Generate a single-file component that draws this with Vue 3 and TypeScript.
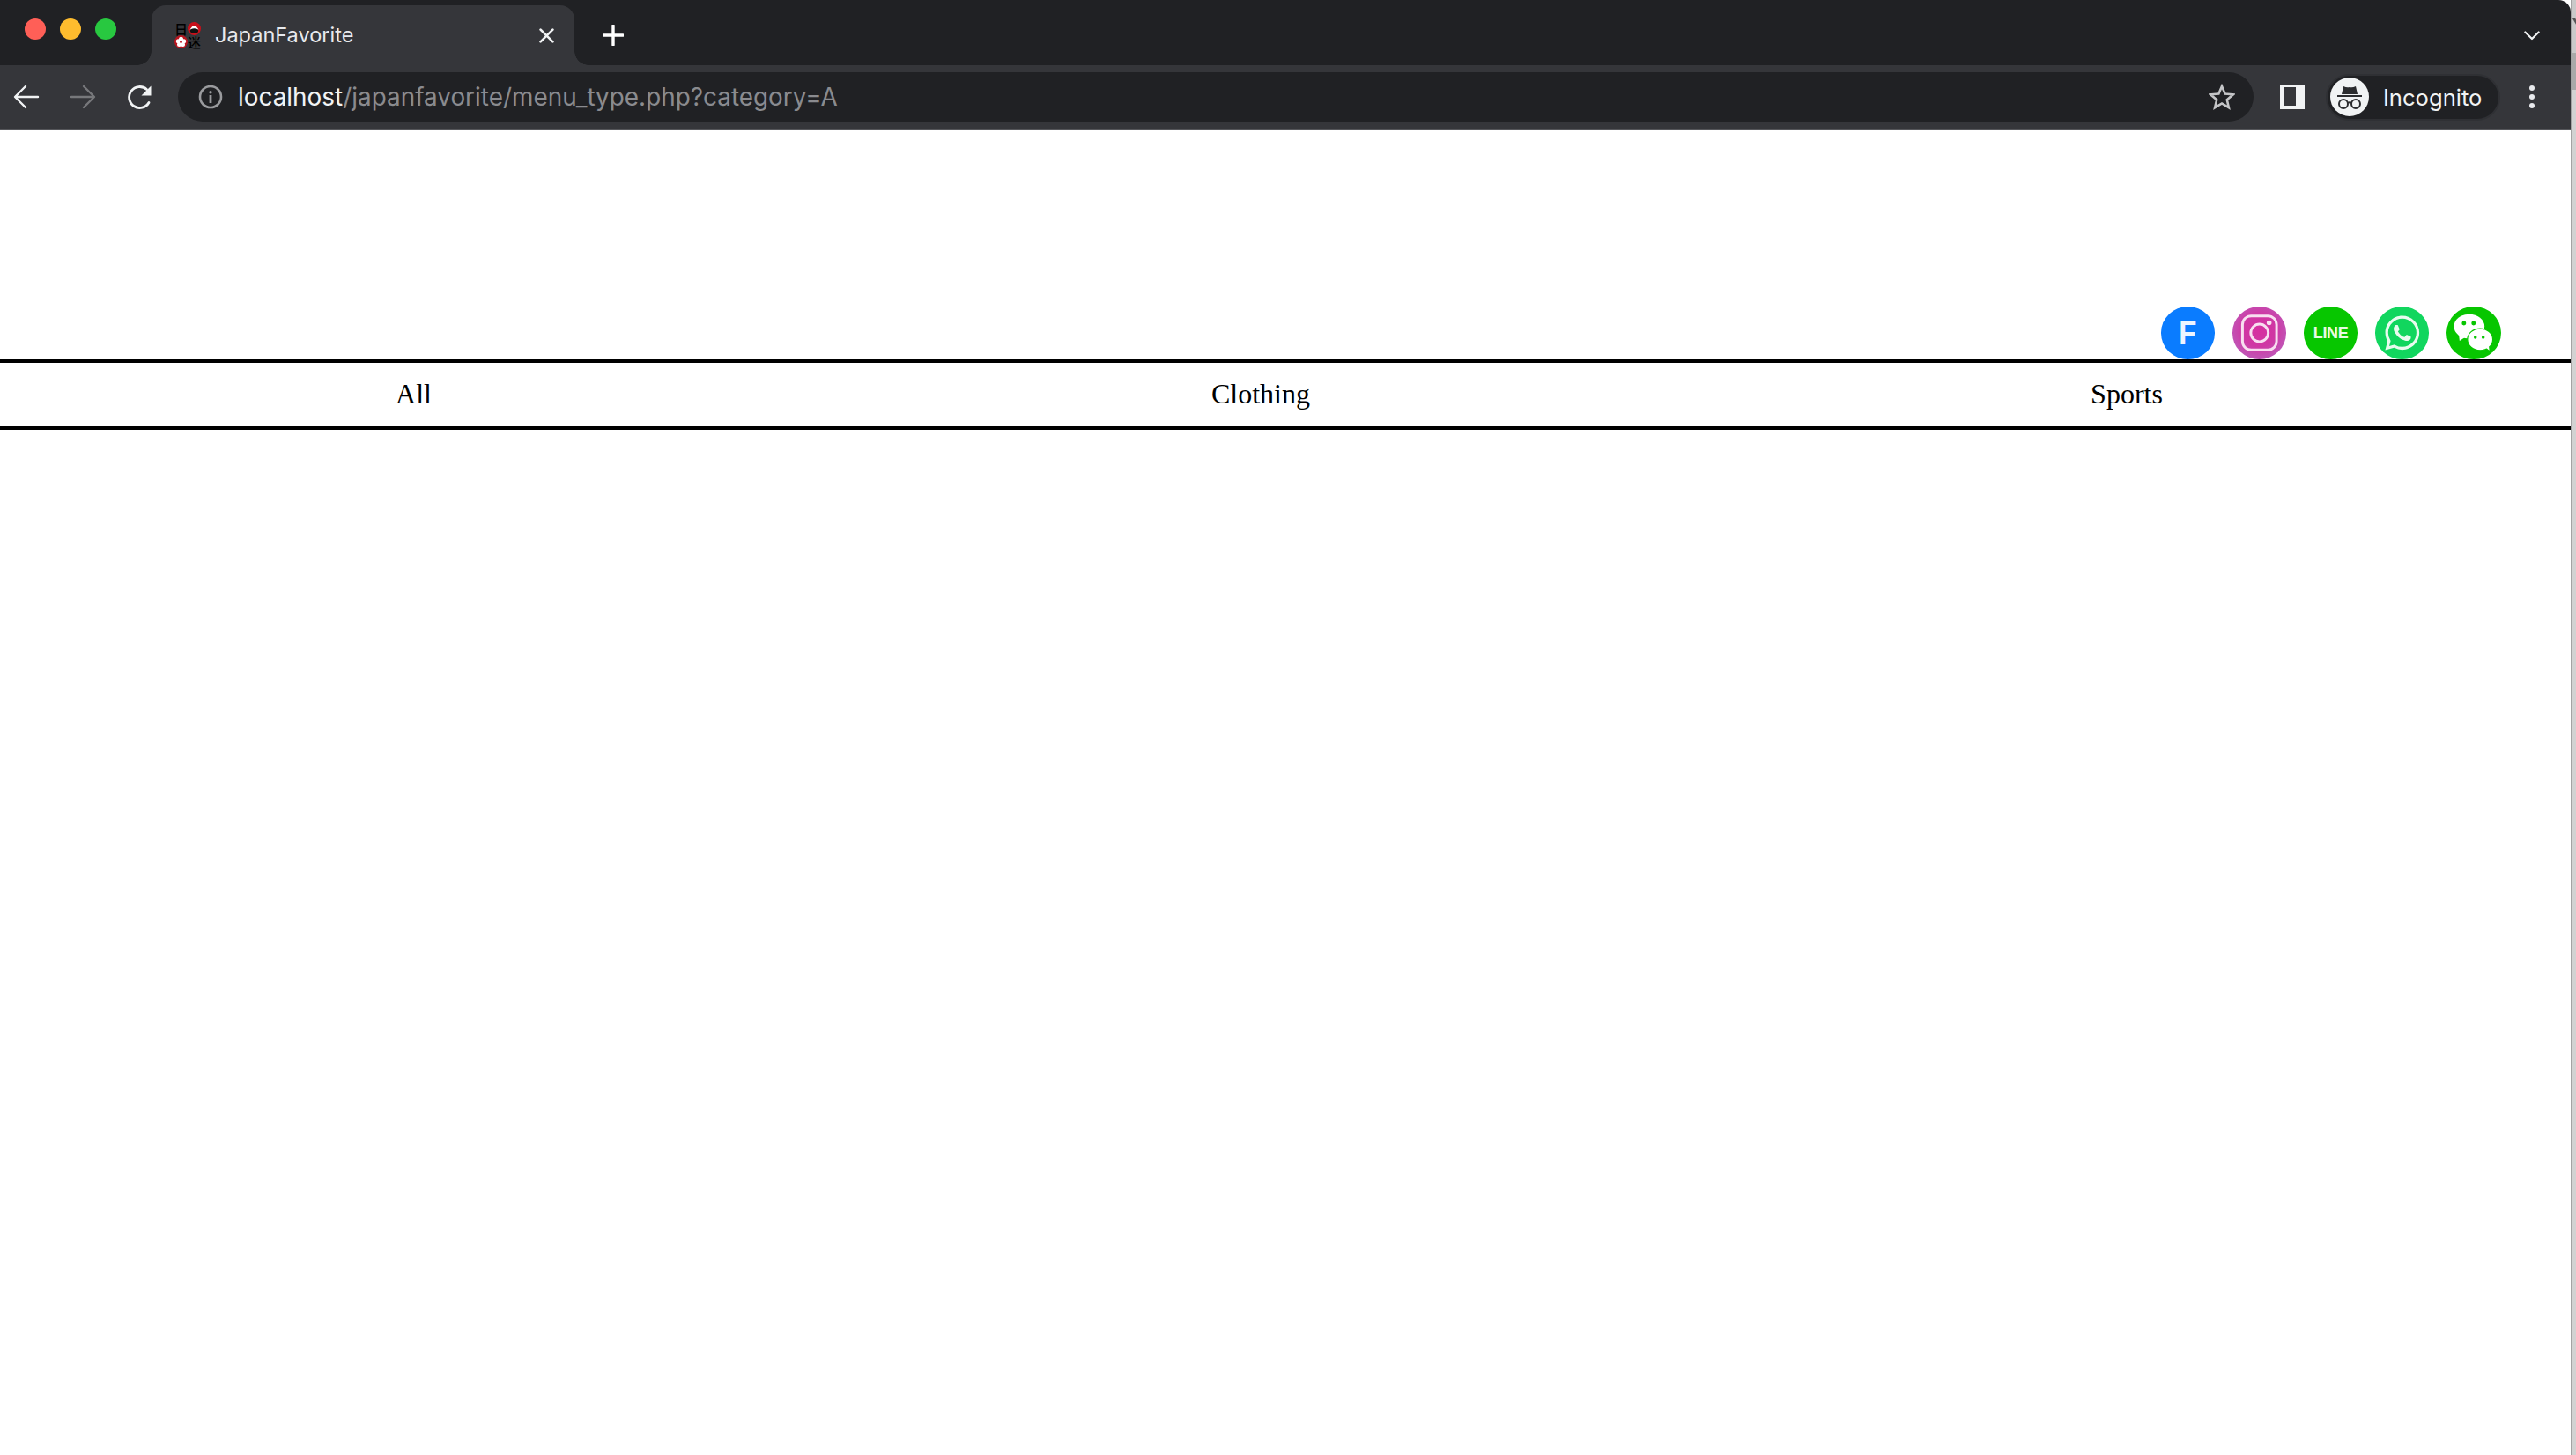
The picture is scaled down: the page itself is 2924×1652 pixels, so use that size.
<script setup lang="ts">
const columns: string[] = ['All', 'Clothing', 'Sports']
</script>

<template>
  <div class="screen">
    <div class="window">
      <div class="tabstrip">
        <div class="lights">
          <span class="light red"></span>
          <span class="light yellow"></span>
          <span class="light green"></span>
        </div>
        <div class="tab">
          <div class="favicon">
            <span class="kanji">日</span>
            <svg viewBox="0 0 15 15" class="fav-mark">
              <circle cx="7.5" cy="7.5" r="7.5" fill="#c8101a" />
              <path d="M2.5 8.5 L6 4 H9 L12.5 8.5 Z" fill="#fff" />
              <ellipse cx="7.5" cy="10" rx="4.6" ry="2.8" fill="#111" />
            </svg>
            <svg viewBox="0 0 15 15" class="fav-mark">
              <circle cx="7.5" cy="7.5" r="7.5" fill="#b8141e" />
              <circle cx="7.5" cy="4.2" r="2.5" fill="#fff" />
              <circle cx="4.3" cy="6.8" r="2.5" fill="#fff" />
              <circle cx="10.7" cy="6.8" r="2.5" fill="#fff" />
              <circle cx="5.5" cy="10.5" r="2.5" fill="#fff" />
              <circle cx="9.5" cy="10.5" r="2.5" fill="#fff" />
              <circle cx="7.5" cy="7.6" r="1.3" fill="#b8141e" />
            </svg>
            <span class="kanji">迷</span>
          </div>
          <span class="tab-title">JapanFavorite</span>
          <svg class="tab-close" viewBox="0 0 16 16">
            <path d="M1.5 1.5 L14.5 14.5 M14.5 1.5 L1.5 14.5" stroke="#f1f3f4" stroke-width="2.5" stroke-linecap="round" />
          </svg>
        </div>
        <svg class="new-tab" viewBox="0 0 24 24">
          <path d="M12 1 V23 M1 12 H23" stroke="#fff" stroke-width="3.4" stroke-linecap="round" />
        </svg>
        <svg class="tab-list" viewBox="0 0 20 12">
          <path d="M1.5 1.5 L10 10 L18.5 1.5" fill="none" stroke="#f1f3f4" stroke-width="2.4" stroke-linecap="round" stroke-linejoin="round" />
        </svg>
      </div>

      <div class="toolbar">
        <div class="nav-btn">
          <svg viewBox="0 0 36 36" class="nav-icon">
            <path d="M31 18 H6 M17 6 L5 18 L17 30" fill="none" stroke="#f1f3f4" stroke-width="2.4" stroke-linecap="round" stroke-linejoin="round" />
          </svg>
        </div>
        <div class="nav-btn">
          <svg viewBox="0 0 36 36" class="nav-icon">
            <path d="M5 18 H30 M19 6 L31 18 L19 30" fill="none" stroke="#77787b" stroke-width="2.4" stroke-linecap="round" stroke-linejoin="round" />
          </svg>
        </div>
        <div class="nav-btn">
          <svg viewBox="0 0 36 36" class="nav-icon">
            <path d="M29 24.5 A12 12 0 1 1 26.5 9.5" fill="none" stroke="#f1f3f4" stroke-width="2.8" stroke-linecap="round" />
            <path d="M31.5 5.5 V16.5 H20.5 Z" fill="#f1f3f4" />
          </svg>
        </div>

        <div class="omnibox">
          <svg class="info" viewBox="0 0 28 28">
            <circle cx="14" cy="14" r="12" fill="none" stroke="#9a9b9e" stroke-width="2.6" />
            <circle cx="14" cy="8.8" r="1.7" fill="#9a9b9e" />
            <rect x="12.6" y="12" width="2.8" height="9" fill="#9a9b9e" />
          </svg>
          <span class="url"><span class="host">localhost</span><span class="path">/japanfavorite/menu_type.php?category=A</span></span>
          <svg class="star" viewBox="0 0 30 30">
            <path d="M15 3 L18.6 11.6 L27.8 12.3 L20.8 18.3 L22.9 27.2 L15 22.5 L7.1 27.2 L9.2 18.3 L2.2 12.3 L11.4 11.6 Z" fill="none" stroke="#c4c5c7" stroke-width="2.6" stroke-linejoin="miter" />
          </svg>
        </div>

        <div class="side-panel"><span class="side-inner"></span></div>

        <div class="pill">
          <div class="avatar">
            <svg viewBox="0 0 44 44" class="avatar-svg">
              <path d="M15 10 Q19 12 22 11 Q25 12 29 10 L31 19 H13 Z" fill="#2b2c2f" />
              <rect x="8" y="20" width="28" height="2" fill="#2b2c2f" />
              <circle cx="15" cy="30" r="5" fill="none" stroke="#2b2c2f" stroke-width="2" />
              <circle cx="29" cy="30" r="5" fill="none" stroke="#2b2c2f" stroke-width="2" />
              <path d="M20 29 Q22 27.5 24 29" fill="none" stroke="#2b2c2f" stroke-width="2" />
            </svg>
          </div>
          <span class="pill-label">Incognito</span>
        </div>

        <div class="menu">
          <span class="dot"></span>
          <span class="dot"></span>
          <span class="dot"></span>
        </div>
      </div>

      <div class="page">
        <div class="socials">
          <div class="social fb">F</div>
          <div class="social ig">
            <svg viewBox="0 0 62 60" class="social-svg">
              <rect x="11.5" y="10.5" width="39" height="39" rx="10" fill="none" stroke="#f8dff0" stroke-width="3" />
              <circle cx="31" cy="30" r="10" fill="none" stroke="#f8dff0" stroke-width="3" />
              <circle cx="42" cy="18.5" r="2.8" fill="#f8dff0" />
            </svg>
          </div>
          <div class="social line">LINE</div>
          <div class="social wa">
            <svg viewBox="-6.5 -6.5 37 37" class="social-svg">
              <path fill="#e9fbef" d="M17.472 14.382c-.297-.149-1.758-.867-2.03-.967-.273-.099-.471-.148-.67.15-.197.297-.767.966-.94 1.164-.173.199-.347.223-.644.075-.297-.15-1.255-.463-2.39-1.475-.883-.788-1.48-1.761-1.653-2.059-.173-.297-.018-.458.13-.606.134-.133.298-.347.446-.52.149-.174.198-.298.298-.497.099-.198.05-.371-.025-.52-.075-.149-.669-1.612-.916-2.207-.242-.579-.487-.5-.669-.51-.173-.008-.371-.01-.57-.01-.198 0-.52.074-.792.372-.272.297-1.04 1.016-1.04 2.479 0 1.462 1.065 2.875 1.213 3.074.149.198 2.096 3.2 5.077 4.487.709.306 1.262.489 1.694.625.712.227 1.36.195 1.871.118.571-.085 1.758-.719 2.006-1.413.248-.694.248-1.289.173-1.413-.074-.124-.272-.198-.57-.347m-5.421 7.403h-.004a9.87 9.87 0 01-5.031-1.378l-.361-.214-3.741.982.998-3.648-.235-.374a9.86 9.86 0 01-1.51-5.26c.001-5.45 4.436-9.884 9.888-9.884 2.64 0 5.122 1.03 6.988 2.898a9.825 9.825 0 012.893 6.994c-.003 5.45-4.437 9.884-9.885 9.884m8.413-18.297A11.815 11.815 0 0012.05 0C5.495 0 .16 5.335.157 11.892c0 2.096.547 4.142 1.588 5.945L.057 24l6.305-1.654a11.882 11.882 0 005.683 1.448h.005c6.554 0 11.89-5.335 11.893-11.893a11.821 11.821 0 00-3.48-8.413Z" />
            </svg>
          </div>
          <div class="social wc">
            <svg viewBox="0 0 62 60" class="social-svg">
              <ellipse cx="26" cy="22.5" rx="17.5" ry="14" fill="#fff" />
              <path d="M14 31 L15 39 L23 34 Z" fill="#fff" />
              <ellipse cx="38.5" cy="37.5" rx="14.5" ry="12.5" fill="#fff" stroke="#07c600" stroke-width="1.2" />
              <path d="M43 45 L49 50 L48 42 Z" fill="#fff" />
              <circle cx="20" cy="19" r="2.5" fill="#07c600" />
              <circle cx="31" cy="19" r="2.5" fill="#07c600" />
              <circle cx="33" cy="35" r="1.8" fill="#07c600" />
              <circle cx="42" cy="35" r="1.8" fill="#07c600" />
            </svg>
          </div>
        </div>
        <nav class="cats">
          <a v-for="c in columns" :key="c" class="cat">{{ c }}</a>
        </nav>
      </div>
    </div>

    <div class="backdrop">
      <div class="backdrop-top"><span class="backdrop-glyph"></span></div>
      <div class="backdrop-band"></div>
      <div class="backdrop-rest"></div>
    </div>
  </div>
</template>

<style scoped>
.screen {
  display: flex;
  width: 2924px;
  height: 1652px;
  overflow: hidden;
  background: #fff;
}
.window {
  width: 2918px;
  flex: none;
  display: flex;
  flex-direction: column;
  border-top-right-radius: 14px;
  overflow: hidden;
  font-family: Inter, "Noto Sans", sans-serif;
}
.tabstrip {
  height: 74px;
  flex: none;
  background: #202124;
  display: flex;
  align-items: flex-end;
  position: relative;
}
.lights {
  display: flex;
  gap: 16px;
  padding-left: 28px;
  align-self: flex-start;
  padding-top: 21px;
  width: 172px;
  box-sizing: border-box;
  flex: none;
}
.light {
  width: 24px;
  height: 24px;
  border-radius: 50%;
}
.red { background: #ff5f57; }
.yellow { background: #febc2e; }
.green { background: #28c840; }
.tab {
  width: 480px;
  height: 68px;
  flex: none;
  background: #35363a;
  border-radius: 16px 16px 0 0;
  display: flex;
  align-items: center;
  position: relative;
  padding: 0 23px 0 26px;
  box-sizing: border-box;
}
.tab::before,
.tab::after {
  content: "";
  position: absolute;
  bottom: 0;
  width: 16px;
  height: 16px;
}
.tab::before {
  left: -16px;
  background: radial-gradient(circle at 0 0, #202124 15.5px, #35363a 16px);
}
.tab::after {
  right: -16px;
  background: radial-gradient(circle at 100% 0, #202124 15.5px, #35363a 16px);
}
.favicon {
  width: 30px;
  height: 30px;
  flex: none;
  display: grid;
  grid-template-columns: 15px 15px;
  grid-template-rows: 15px 15px;
}
.fav-mark {
  width: 15px;
  height: 15px;
  display: block;
}
.kanji {
  font-family: "Noto Sans CJK JP", sans-serif;
  font-size: 15px;
  line-height: 15px;
  font-weight: 500;
  color: #000;
  text-align: center;
}
.tab-title {
  margin-left: 16px;
  font-size: 23.5px;
  line-height: 30px;
  color: #e8eaed;
  flex: 1;
  white-space: nowrap;
}
.tab-close {
  width: 17px;
  height: 17px;
  flex: none;
}
.new-tab {
  width: 24px;
  height: 24px;
  flex: none;
  margin-left: 32px;
  align-self: flex-start;
  margin-top: 28px;
}
.tab-list {
  position: absolute;
  left: 2865px;
  top: 35px;
  width: 18px;
  height: 11px;
}
.toolbar {
  height: 72px;
  flex: none;
  background: #35363a;
  display: flex;
  align-items: center;
  gap: 4px;
}
.nav-btn {
  width: 60px;
  height: 72px;
  flex: none;
  display: flex;
  align-items: center;
  justify-content: center;
}
.nav-icon {
  width: 36px;
  height: 36px;
}
.omnibox {
  margin-left: 10px;
  width: 2356px;
  height: 56px;
  flex: none;
  background: #202124;
  border-radius: 28px;
  display: flex;
  align-items: center;
  padding-left: 23px;
  padding-right: 21px;
  box-sizing: border-box;
}
.info {
  width: 28px;
  height: 28px;
  flex: none;
}
.url {
  margin-left: 17px;
  flex: 1;
  font-size: 27.9px;
  line-height: 36px;
  white-space: nowrap;
}
.host { color: #f1f3f4; }
.path { color: #8a8b8f; }
.star {
  width: 30px;
  height: 30px;
  flex: none;
}
.side-panel {
  margin-left: 26px;
  width: 28px;
  height: 28px;
  flex: none;
  background: #f1f3f4;
  padding: 3px 10px 4px 4px;
  box-sizing: border-box;
}
.side-inner {
  display: block;
  width: 14px;
  height: 21px;
  background: #35363a;
}
.pill {
  margin-left: 20px;
  width: 198px;
  height: 53px;
  flex: none;
  box-sizing: border-box;
  background: #202124;
  border: 2px solid #2f3034;
  border-radius: 27px;
  display: flex;
  align-items: center;
  padding-left: 3px;
}
.avatar {
  width: 44px;
  height: 44px;
  border-radius: 50%;
  background: #f1f3f4;
  flex: none;
}
.avatar-svg {
  width: 44px;
  height: 44px;
  display: block;
}
.pill-label {
  margin-left: 16px;
  color: #f1f3f4;
  font-size: 25.6px;
  white-space: nowrap;
}
.menu {
  margin-left: 29px;
  display: flex;
  flex-direction: column;
  gap: 4px;
  flex: none;
}
.dot {
  width: 6px;
  height: 6px;
  border-radius: 50%;
  background: #e8eaed;
}
.page {
  flex: 1;
  background: #fff;
  border-top: 2px solid #55565a;
}
.socials {
  box-sizing: border-box;
  display: flex;
  justify-content: flex-end;
  align-items: flex-end;
  gap: 19.6px;
  padding: 0 79.5px 0 0;
  border-bottom: 4px solid #000;
  height: 264px;
}
.social {
  width: 61.5px;
  height: 60px;
  border-radius: 50%;
  flex: none;
  display: flex;
  align-items: center;
  justify-content: center;
  color: #fff;
  font-family: "Liberation Sans", Arial, sans-serif;
  font-weight: 700;
}
.social-svg {
  width: 61.5px;
  height: 60px;
  display: block;
}
.fb {
  background: #0a7cff;
  color: #eef5ff;
  font-family: Inter, sans-serif;
  font-weight: 600;
  font-size: 36px;
}
.ig {
  background: radial-gradient(circle at 50% 45%, #d62f9f 0%, #cf38a4 42%, #b270c6 100%);
}
.line {
  background: #07c600;
  color: #e6fbe5;
  font-size: 18px;
  letter-spacing: -0.4px;
}
.wa { background: #11d65e; }
.wc { background: #07c600; }
.cats {
  display: grid;
  grid-template-columns: 939px 984px 982px;
  align-items: center;
  border-bottom: 4px solid #000;
  padding-bottom: 2px;
  height: 70px;
}
.cat {
  text-align: center;
  font-family: "Liberation Serif", "Times New Roman", serif;
  font-size: 32px;
  color: #000;
}
.backdrop {
  flex: 1;
  display: flex;
  flex-direction: column;
  border-left: 2px solid #a3a3a3;
}
.backdrop-top {
  height: 60px;
  flex: none;
  background: #c9c9c9;
  position: relative;
  overflow: hidden;
}
.backdrop-glyph {
  position: absolute;
  left: 0;
  top: 21px;
  width: 8px;
  height: 8px;
  background: #555;
  clip-path: polygon(0 0, 40% 0, 100% 100%, 60% 100%);
}
.backdrop-band {
  height: 42px;
  flex: none;
  background: #a9a9a9;
}
.backdrop-rest {
  flex: 1;
  background: #d2d2d2;
}
</style>
